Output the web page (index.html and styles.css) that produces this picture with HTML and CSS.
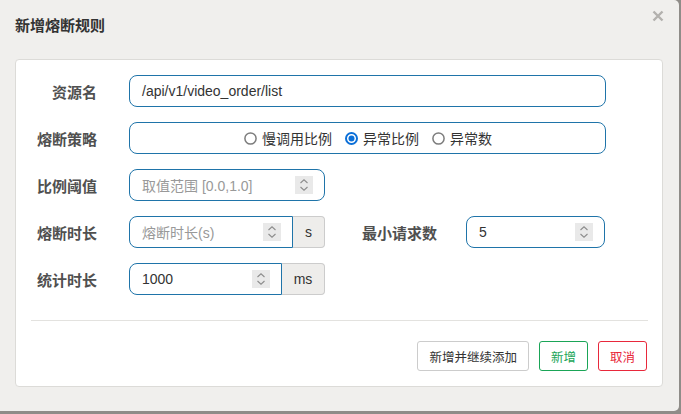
FILE: index.html
```html
<!DOCTYPE html>
<html lang="zh-CN">
<head>
<meta charset="utf-8">
<title>新增熔断规则</title>
<link rel="stylesheet" href="styles.css">
</head>
<body>
<div class="dialog">
  <div class="header">
    <h1 class="title">新增熔断规则</h1>
    <span class="close"><svg width="12" height="12" viewBox="0 0 12 12"><path d="M1.5 1.5 L10.5 10.5 M10.5 1.5 L1.5 10.5" stroke="#b3b1ae" stroke-width="2.4" fill="none"/></svg></span>
  </div>
  <div class="panel">
    <div class="form">
      <div class="row">
        <span class="label">资源名</span>
        <div class="field w-full"><span class="value">/api/v1/video_order/list</span></div>
      </div>
      <div class="row">
        <span class="label">熔断策略</span>
        <div class="field w-full radios">
          <span class="radio-item"><svg class="radio" width="13" height="13" viewBox="0 0 13 13"><circle cx="6.5" cy="6.5" r="5.6" fill="#fff" stroke="#7d7d7d" stroke-width="1.5"/></svg>慢调用比例</span>
          <span class="radio-item"><svg class="radio" width="13" height="13" viewBox="0 0 13 13"><circle cx="6.5" cy="6.5" r="5.5" fill="#fff" stroke="#0b6fd8" stroke-width="2"/><circle cx="6.5" cy="6.5" r="3" fill="#0b6fd8"/></svg>异常比例</span>
          <span class="radio-item"><svg class="radio" width="13" height="13" viewBox="0 0 13 13"><circle cx="6.5" cy="6.5" r="5.6" fill="#fff" stroke="#7d7d7d" stroke-width="1.5"/></svg>异常数</span>
        </div>
      </div>
      <div class="row">
        <span class="label">比例阈值</span>
        <div class="field w-196"><span class="placeholder">取值范围 [0.0,1.0]</span><svg class="spin" width="18" height="18" viewBox="0 0 18 18"><rect width="18" height="18" fill="#e9e9e9"/><path d="M5.5 7 L9 3.8 L12.5 7 M5.5 11 L9 14.2 L12.5 11" stroke="#8c8c8c" stroke-width="1.1" fill="none"/></svg></div>
      </div>
      <div class="row">
        <span class="label">熔断时长</span>
        <div class="group">
          <div class="field grouped w-164"><span class="placeholder">熔断时长(s)</span><svg class="spin" width="18" height="18" viewBox="0 0 18 18"><rect width="18" height="18" fill="#e9e9e9"/><path d="M5.5 7 L9 3.8 L12.5 7 M5.5 11 L9 14.2 L12.5 11" stroke="#8c8c8c" stroke-width="1.1" fill="none"/></svg></div>
          <span class="addon w-32">s</span>
        </div>
        <span class="label label-2">最小请求数</span>
        <div class="field w-139"><span class="value">5</span><svg class="spin" width="18" height="18" viewBox="0 0 18 18"><rect width="18" height="18" fill="#e9e9e9"/><path d="M5.5 7 L9 3.8 L12.5 7 M5.5 11 L9 14.2 L12.5 11" stroke="#8c8c8c" stroke-width="1.1" fill="none"/></svg></div>
      </div>
      <div class="row">
        <span class="label">统计时长</span>
        <div class="group">
          <div class="field grouped w-153"><span class="value">1000</span><svg class="spin" width="18" height="18" viewBox="0 0 18 18"><rect width="18" height="18" fill="#e9e9e9"/><path d="M5.5 7 L9 3.8 L12.5 7 M5.5 11 L9 14.2 L12.5 11" stroke="#8c8c8c" stroke-width="1.1" fill="none"/></svg></div>
          <span class="addon w-43">ms</span>
        </div>
      </div>
    </div>
    <hr class="divider">
    <div class="actions">
      <button class="btn btn-default">新增并继续添加</button>
      <button class="btn btn-success">新增</button>
      <button class="btn btn-danger">取消</button>
    </div>
  </div>
</div>
</body>
</html>
```

FILE: styles.css
```css
html, body {
  margin: 0;
  padding: 0;
}
body {
  width: 681px;
  height: 414px;
  background: #8f8c88;
  font-family: "Liberation Sans", "Noto Sans CJK SC", sans-serif;
  color: #333;
  overflow: hidden;
}
.dialog {
  width: 679px;
  height: 411px;
  background: #f0efed;
  border-radius: 0 5px 5px 0;
  display: flex;
  flex-direction: column;
  position: relative;
}
.header {
  height: 59px;
  box-sizing: border-box;
  padding: 16px 15px 0;
}
.title {
  margin: 0;
  font-size: 15px;
  line-height: 20px;
  font-weight: bold;
  color: #333;
}
.close {
  position: absolute;
  top: 10px;
  right: 15px;
  width: 12px;
  height: 12px;
  display: block;
}
.close svg { display: block; }
.panel {
  margin: 0 16px 0 15px;
  height: 328px;
  box-sizing: border-box;
  background: #fff;
  border: 1px solid #dcdbd8;
  border-radius: 4px;
  padding: 15px 0 15px;
}
.form {
  display: flex;
  flex-direction: column;
  gap: 15px;
}
.row {
  display: flex;
  align-items: center;
  height: 32px;
}
.label {
  width: 81px;
  margin-right: 32px;
  text-align: right;
  font-size: 15px;
  font-weight: bold;
  color: #505050;
  flex: none;
}
.label-2 {
  width: auto;
  margin-left: 37px;
  margin-right: 29px;
}
.field {
  height: 32px;
  box-sizing: border-box;
  border: 1px solid #1f74a9;
  border-radius: 8px;
  padding: 0 11px 0 12px;
  display: flex;
  align-items: center;
  font-size: 14px;
  flex: none;
}
.value {
  flex: 1;
  color: #333;
}
.placeholder {
  flex: 1;
  color: #999;
}
.spin {
  display: block;
  flex: none;
}
.w-full { width: 477px; }
.w-196 { width: 196px; }
.w-164 { width: 164px; }
.w-153 { width: 153px; }
.w-139 { width: 139px; }
.w-32 { width: 32px; }
.w-43 { width: 43px; }
.radios {
  justify-content: center;
  gap: 13px;
  color: #333;
}
.radio-item {
  display: flex;
  align-items: center;
  gap: 5px;
}
.radio { display: block; }
.group {
  display: flex;
  flex: none;
}
.grouped {
  border-radius: 8px 0 0 8px;
}
.addon {
  height: 32px;
  box-sizing: border-box;
  background: #eeedeb;
  border: 1px solid #ccc;
  border-left: none;
  border-radius: 0 4px 4px 0;
  display: flex;
  align-items: center;
  justify-content: center;
  font-size: 14px;
  color: #333;
}
.divider {
  margin: 25px 14px 0 15px;
  border: none;
  border-top: 1px solid #e3e2df;
  height: 0;
}
.actions {
  display: flex;
  justify-content: flex-end;
  gap: 10px;
  margin: 20px 15px 0 0;
}
.btn {
  height: 30px;
  box-sizing: border-box;
  padding: 0 11px;
  background: #fff;
  border: 1px solid #ccc;
  border-radius: 3px;
  font-family: "Liberation Sans", "Noto Sans CJK SC", sans-serif;
  font-size: 12.5px;
  color: #333;
}
.btn-success {
  border-color: #1aa557;
  color: #1aa557;
}
.btn-danger {
  border-color: #e8283b;
  color: #e8283b;
}
```
